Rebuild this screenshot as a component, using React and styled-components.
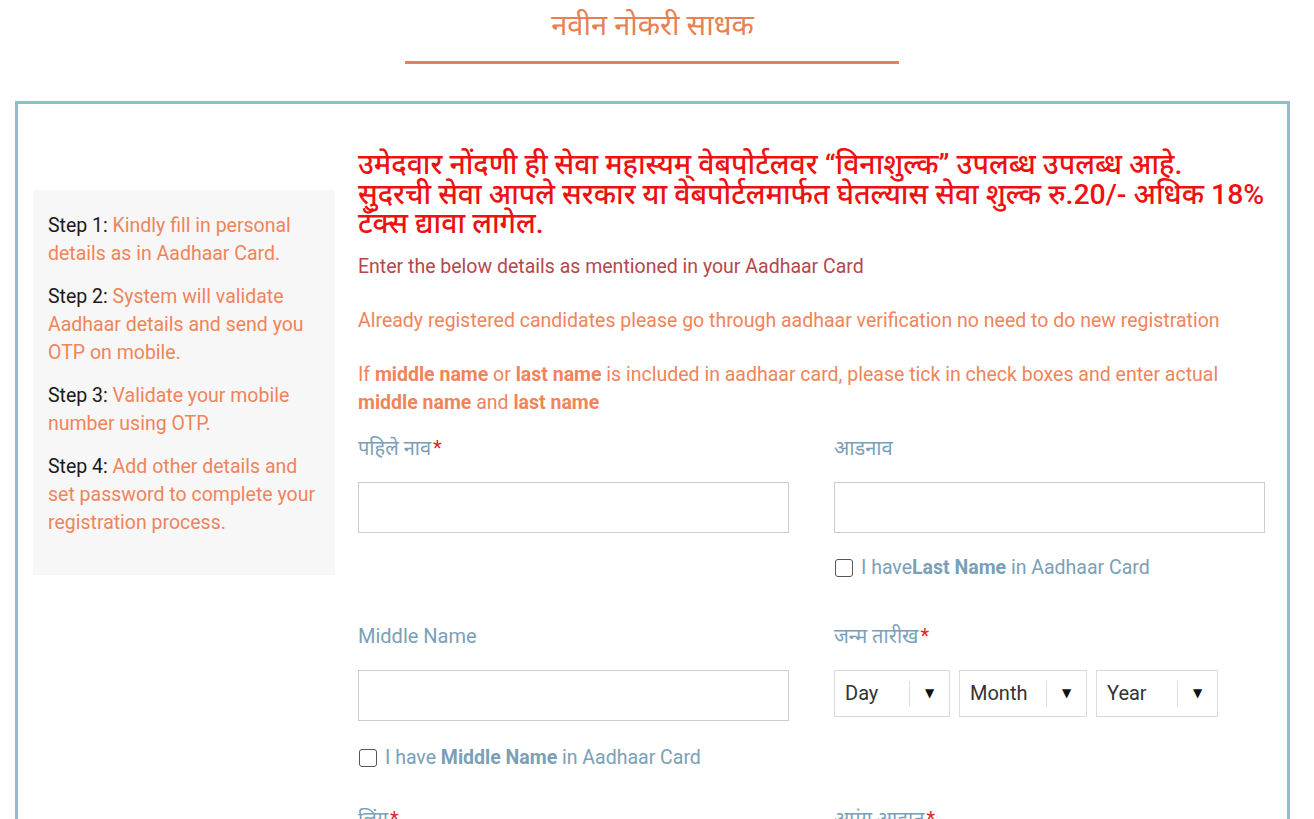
import React from "react";
import styled, { createGlobalStyle } from "styled-components";

const Global = createGlobalStyle`
  * { box-sizing: border-box; }
  html, body { margin: 0; padding: 0; background: #fff; }
  body { font-family: Roboto, "Noto Sans", "DejaVu Sans", sans-serif; overflow: hidden; }
`;

const Page = styled.div`
  width: 1314px;
  height: 819px;
  overflow: hidden;
  padding: 0 24px 0 15px;
`;

const Header = styled.header`
  display: flex;
  flex-direction: column;
  align-items: center;
  padding-top: 6px;
  height: 101px;
`;

const Title = styled.h1`
  margin: 0;
  font-weight: 400;
  font-size: 29px;
  line-height: 38px;
  color: #e8804f;
`;

const TitleRule = styled.div`
  width: 494px;
  height: 3px;
  background: #e8804f;
  margin-top: 17px;
  margin-right: 2px;
`;

const Box = styled.section`
  border: 3px solid #93bccd;
  border-bottom: none;
  display: flex;
  align-items: flex-start;
  gap: 23px;
  padding: 46px 22px 0 15px;
  min-height: 760px;
`;

const Sidebar = styled.aside`
  width: 302px;
  flex: none;
  background: #f7f7f7;
  margin-top: 40px;
  padding: 22px 15px 38px 15px;
`;

const Step = styled.p`
  margin: 0 0 15px;
  font-size: 19.5px;
  line-height: 28px;
  color: #f0845a;
  &:last-child { margin-bottom: 0; }
`;

const StepNo = styled.span`
  color: #1a1a1a;
`;

const Main = styled.div`
  flex: 1;
  min-width: 0;
`;

const Notice = styled.h2`
  margin: 0 0 14px;
  font-size: 28.4px;
  line-height: 29.5px;
  font-weight: 500;
  color: #ee1111;
  white-space: nowrap;
`;

const Info = styled.p`
  margin: 0 0 26px;
  font-size: 19.5px;
  line-height: 28px;
  color: ${(p) => (p.$dark ? "#b5474a" : "#f0845a")};
  b { font-weight: 700; }
  &:last-of-type { margin-bottom: 0; }
`;

const Grid = styled.div`
  display: grid;
  grid-template-columns: 431px 431px;
  column-gap: 45px;
  margin-top: 18px;
`;

const Field = styled.div`
  display: flex;
  flex-direction: column;
`;

const Label = styled.label`
  font-size: 20px;
  line-height: 26px;
  color: #7aa0b8;
  margin-bottom: 21px;
`;

const Req = styled.span`
  color: #e02424;
  margin-left: 2px;
`;

const TextInput = styled.input`
  width: 100%;
  height: 51px;
  border: 1px solid #cccccc;
  background: #fff;
  outline: none;
  font-size: 18px;
  padding: 0 12px;
`;

const CheckRow = styled.label`
  display: flex;
  align-items: center;
  gap: 8px;
  margin-top: ${(p) => p.$mt}px;
  font-size: 19.5px;
  line-height: 26px;
  color: #7aa0b8;
  b { font-weight: 700; }
`;

const Box16 = styled.span`
  width: 18px;
  height: 18px;
  border: 1.5px solid #555;
  border-radius: 3px;
  flex: none;
  margin-left: 1px;
`;

const Selects = styled.div`
  display: flex;
  gap: 9px;
`;

const Select = styled.div`
  width: ${(p) => p.$w}px;
  height: 47px;
  border: 1px solid #dadada;
  display: flex;
  align-items: center;
  padding-left: 10px;
  font-size: 20px;
  color: #333;
`;

const SelText = styled.span`
  flex: 1;
`;

const SelArrow = styled.span`
  width: 40px;
  height: 25px;
  border-left: 1px solid #dcdcdc;
  display: flex;
  align-items: center;
  justify-content: center;
  font-size: 12px;
  color: #111;
`;

const RowGap = styled.div`
  grid-column: 1 / -1;
  height: ${(p) => p.$h}px;
`;

function Checkbox({ mt = 22, children }) {
  return (
    <CheckRow $mt={mt}>
      <Box16 />
      <span>{children}</span>
    </CheckRow>
  );
}

function DateSelect({ w, text }) {
  return (
    <Select $w={w}>
      <SelText>{text}</SelText>
      <SelArrow>▼</SelArrow>
    </Select>
  );
}

export default function App() {
  return (
    <Page>
      <Global />
      <Header>
        <Title>नवीन नोकरी साधक</Title>
        <TitleRule />
      </Header>
      <Box>
        <Sidebar>
          <Step><StepNo>Step 1: </StepNo>Kindly fill in personal details as in Aadhaar Card.</Step>
          <Step><StepNo>Step 2: </StepNo>System will validate Aadhaar details and send you OTP on mobile.</Step>
          <Step><StepNo>Step 3: </StepNo>Validate your mobile number using OTP.</Step>
          <Step><StepNo>Step 4: </StepNo>Add other details and set password to complete your registration process.</Step>
        </Sidebar>
        <Main>
          <Notice>
            उमेदवार नोंदणी ही सेवा महास्यम् वेबपोर्टलवर “विनाशुल्क” उपलब्ध उपलब्ध आहे.<br />
            सुदरची सेवा आपले सरकार या वेबपोर्टलमार्फत घेतल्यास सेवा शुल्क रु.20/- अधिक 18%<br />
            टॅक्स द्यावा लागेल.
          </Notice>
          <Info $dark>Enter the below details as mentioned in your Aadhaar Card</Info>
          <Info>Already registered candidates please go through aadhaar verification no need to do new registration</Info>
          <Info>
            If <b>middle name</b> or <b>last name</b> is included in aadhaar card, please tick in check boxes and enter actual <b>middle name</b> and <b>last name</b>
          </Info>
          <Grid>
            <Field>
              <Label>पहिले नाव<Req>*</Req></Label>
              <TextInput />
            </Field>
            <Field>
              <Label>आडनाव</Label>
              <TextInput />
              <Checkbox>I have<b>Last Name</b> in Aadhaar Card</Checkbox>
            </Field>
            <RowGap $h={42} />
            <Field>
              <Label>Middle Name</Label>
              <TextInput />
              <Checkbox mt={24}>I have <b>Middle Name</b> in Aadhaar Card</Checkbox>
            </Field>
            <Field>
              <Label>जन्म तारीख<Req>*</Req></Label>
              <Selects>
                <DateSelect w={116} text="Day" />
                <DateSelect w={128} text="Month" />
                <DateSelect w={122} text="Year" />
              </Selects>
            </Field>
            <RowGap $h={35} />
            <Field>
              <Label>लिंग<Req>*</Req></Label>
            </Field>
            <Field>
              <Label>अपंग आहात<Req>*</Req></Label>
            </Field>
          </Grid>
        </Main>
      </Box>
    </Page>
  );
}
